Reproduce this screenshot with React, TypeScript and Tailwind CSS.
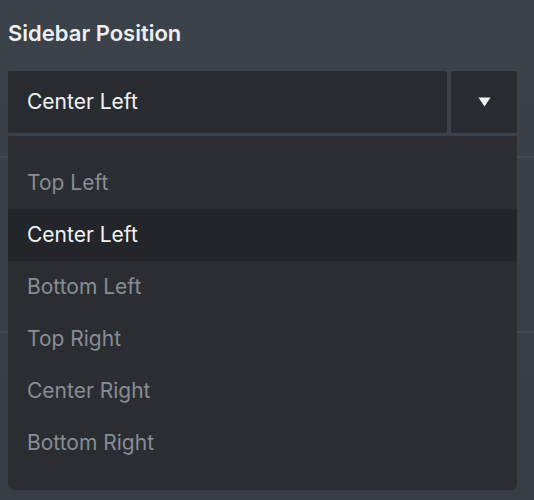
const options = ['Top Left', 'Center Left', 'Bottom Left', 'Top Right', 'Center Right', 'Bottom Right'];

const SelectField = ({ value }: { value: string }) => {
  return (
    <div className="flex h-[62px] gap-[4px]">
      <div className="flex flex-1 items-center rounded-[2px] bg-[#282c31] pl-[19px] text-[21px] text-[#f2f3f5]">
        {value}
      </div>
      <div className="flex w-[66px] items-center justify-center rounded-[2px] bg-[#282c31]">
        <svg width="13" height="10" viewBox="0 0 13 10">
          <path d="M0.5 0.5 L12.5 0.5 L6.5 9.5 Z" fill="#f2f3f5" />
        </svg>
      </div>
    </div>
  );
};

export default function App() {
  const selected = 'Center Left';

  return (
    <div
      className="relative h-[500px] w-[534px] overflow-hidden bg-gradient-to-b from-[#3b4249] to-[#363d45] pl-[8px] pr-[17px] pt-[19px]"
      style={{ fontFamily: 'Inter, "Liberation Sans", sans-serif' }}
    >
      {/* background page dividers peeking out behind the menu */}
      <div className="absolute left-0 right-0 top-[156px] h-[2px] bg-[#434a52]" />
      <div className="absolute left-0 right-0 top-[331px] h-[2px] bg-[#434a52]" />

      <h2 className="text-[22px] font-semibold leading-[28px] text-[#eef0f2]">Sidebar Position</h2>

      <div className="relative mt-[24px]">
        <SelectField value={selected} />

        <ul className="absolute left-0 right-0 top-[65px] rounded-b-[7px] bg-[#2a2d32] py-[21px]">
          {options.map((opt) => (
            <li
              key={opt}
              className={
                opt === selected
                  ? 'flex h-[52px] items-center bg-[#222529] pl-[19px] text-[21px] text-[#f2f3f5]'
                  : 'flex h-[52px] items-center pl-[19px] text-[21px] text-[#878d94]'
              }
            >
              {opt}
            </li>
          ))}
        </ul>
      </div>
    </div>
  );
}
